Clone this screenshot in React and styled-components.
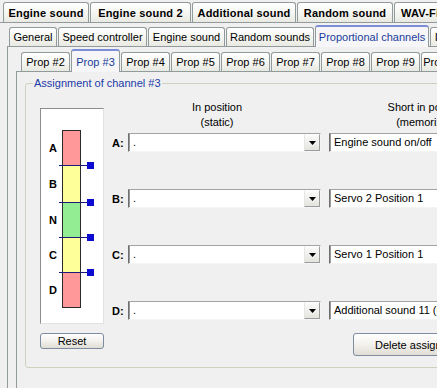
import styled, { createGlobalStyle, css } from "styled-components";

const GlobalStyle = createGlobalStyle`
  html, body {
    margin: 0;
    padding: 0;
    background: #f0f0f0;
  }
  body {
    font-family: "Liberation Sans", Arial, sans-serif;
    font-size: 11px;
    color: #000;
  }
`;

const Window = styled.div`
  width: 437px;
  height: 388px;
  overflow: hidden;
  background: #f0f0f0;
`;

const Strip = styled.div`
  display: flex;
  align-items: flex-end;
  box-sizing: border-box;
  height: ${(p) => p.$h}px;
  padding-left: ${(p) => p.$left}px;
  white-space: nowrap;
`;

const Tab = styled.div`
  flex: 0 0 auto;
  box-sizing: border-box;
  display: flex;
  align-items: center;
  justify-content: center;
  width: ${(p) => p.$w}px;
  height: ${(p) => p.$h}px;
  margin-right: 1px;
  border: 1px solid #919b9c;
  border-bottom: none;
  border-radius: 3px 3px 0 0;
  background: linear-gradient(#ffffff, #f5f5f1 55%, #e9e9e2);
  font-weight: ${(p) => (p.$bold ? 700 : 400)};
  letter-spacing: ${(p) => (p.$bold ? "0.2px" : "0")};
  overflow: hidden;
  ${(p) =>
    p.$active &&
    css`
      position: relative;
      z-index: 2;
      height: ${p.$h + p.$lift + 1}px;
      margin-bottom: -1px;
      border-top: 2px solid #7b8ed6;
      background: #f6f6f8;
      color: #1b3c9b;
    `}
`;

const Page = styled.div`
  border-top: 1px solid #919b9c;
  border-left: ${(p) => (p.$edge ? "1px solid #919b9c" : "none")};
  padding: ${(p) => p.$pad};
`;

const Group = styled.fieldset`
  width: 600px;
  margin: 0;
  padding: 0;
  border: 1px solid #d0d0bf;
  border-radius: 3px;
  min-width: 0;
`;

const Caption = styled.legend`
  margin-left: 7px;
  padding: 0 1px;
  line-height: 13px;
  color: #1c3aa9;
`;

const GroupBody = styled.div`
  display: flex;
  align-items: flex-start;
  gap: 8px;
  padding: 10px 0 11px 14px;
`;

const LeftCol = styled.div`
  display: flex;
  flex-direction: column;
  gap: 9px;
  margin-top: 8px;
`;

const SliderBox = styled.div`
  box-sizing: border-box;
  width: 64px;
  height: 216px;
  padding-top: 21px;
  background: #fff;
  border: 1px solid;
  border-color: #8d8d8d #e2e2e2 #e2e2e2 #8d8d8d;
`;

const Zone = styled.div`
  position: relative;
  display: flex;
  height: ${(p) => p.$h}px;
`;

const ZoneLetter = styled.span`
  box-sizing: border-box;
  width: 21px;
  padding-left: 8px;
  align-self: center;
  font-weight: 700;
`;

const ZoneFill = styled.div`
  box-sizing: border-box;
  width: 19px;
  background: ${(p) => p.$color};
  border-left: 1px solid #2a2a2a;
  border-right: 1px solid #2a2a2a;
  border-top: ${(p) => (p.$first ? "1px solid #2a2a2a" : "none")};
  border-bottom: ${(p) => (p.$last ? "1px solid #2a2a2a" : "none")};
`;

const Threshold = styled.div`
  position: absolute;
  z-index: 1;
  left: 18px;
  top: 100%;
  width: 28px;
  height: 1px;
  background: #1a1a7a;
  &::after {
    content: "";
    position: absolute;
    left: 28px;
    top: -3px;
    width: 7px;
    height: 7px;
    background: #0c0cd0;
  }
`;

const PushButton = styled.button`
  box-sizing: border-box;
  width: ${(p) => p.$w}px;
  height: ${(p) => p.$h}px;
  margin: ${(p) => p.$m || "0"};
  padding: 0;
  border: 1px solid #7d8ca0;
  border-radius: 3px;
  background: linear-gradient(#ffffff, #f4f3ef 45%, #e0ddd4);
  font-family: inherit;
  font-size: 11px;
  color: #000;
`;

const Assign = styled.div`
  display: flex;
  flex-direction: column;
`;

const HeadRow = styled.div`
  display: flex;
  padding-left: 16px;
  margin-bottom: 3px;
`;

const HeadCell = styled.div`
  width: ${(p) => p.$w}px;
  margin-right: ${(p) => p.$mr}px;
  text-align: center;
  line-height: 15px;
  white-space: nowrap;
`;

const Rows = styled.div`
  display: flex;
  flex-direction: column;
  gap: 37px;
`;

const Row = styled.div`
  display: flex;
  align-items: center;
  height: 19px;
`;

const RowLabel = styled.span`
  width: 16px;
  font-weight: 700;
`;

const Combo = styled.div`
  box-sizing: border-box;
  display: flex;
  width: ${(p) => p.$w}px;
  height: 19px;
  margin-right: 8px;
  background: #fff;
  border: 1px solid;
  border-color: #a3a3a3 #f4f4f4 #f4f4f4 #6e6e6e;
  box-shadow: inset 1px 0 0 #9a9a9a;
`;

const ComboText = styled.span`
  flex: 1;
  padding-left: 4px;
  line-height: 17px;
  white-space: nowrap;
  overflow: hidden;
`;

const DropButton = styled.span`
  box-sizing: border-box;
  display: flex;
  align-items: center;
  justify-content: center;
  width: 16px;
  height: 17px;
  background: linear-gradient(#fbfbfb, #e4e4de);
  border: 1px solid;
  border-color: #ffffff #9c9c9c #9c9c9c #e6e6e6;
`;

const Arrow = () => (
  <svg width="7" height="4" viewBox="0 0 7 4">
    <path d="M0 0h7L3.5 4z" fill="#000" />
  </svg>
);

const topTabs = [
  { t: "Engine sound", w: 86 },
  { t: "Engine sound 2", w: 101 },
  { t: "Additional sound", w: 104 },
  { t: "Random sound", w: 96 },
  { t: "WAV-Files", w: 68 },
];

const midTabs = [
  { t: "General", w: 48 },
  { t: "Speed controller", w: 89 },
  { t: "Engine sound", w: 77 },
  { t: "Random sounds", w: 88 },
  { t: "Proportional channels", w: 114, active: true },
  { t: "Info", w: 28 },
];

const propTabs = [2, 3, 4, 5, 6, 7, 8, 9, 10];

const zones = [
  { k: "A", h: 35, c: "#ff9999" },
  { k: "B", h: 37, c: "#ffff99" },
  { k: "N", h: 35, c: "#93ee93" },
  { k: "C", h: 35, c: "#ffff99" },
  { k: "D", h: 36, c: "#ff9999" },
];

const rows = [
  { k: "A", memo: "Engine sound on/off" },
  { k: "B", memo: "Servo 2 Position 1" },
  { k: "C", memo: "Servo 1 Position 1" },
  { k: "D", memo: "Additional sound 11 (On/Off)" },
];

export default function App() {
  return (
    <Window>
      <GlobalStyle />
      <Strip $h={22} $left={3}>
        {topTabs.map((tab) => (
          <Tab key={tab.t} $w={tab.w} $h={20} $bold>
            {tab.t}
          </Tab>
        ))}
      </Strip>
      <Page $pad="0 0 0 7px">
        <Strip $h={23} $left={2}>
          {midTabs.map((tab) => (
            <Tab key={tab.t} $w={tab.w} $h={19} $lift={2} $active={tab.active}>
              {tab.t}
            </Tab>
          ))}
        </Strip>
        <Page $edge $pad="0 0 0 8px">
          <Strip $h={24} $left={5}>
            {propTabs.map((n) => (
              <Tab key={n} $w={49} $h={19} $lift={3} $active={n === 3}>
                Prop #{n}
              </Tab>
            ))}
          </Strip>
          <Page $edge $pad="5px 0 30px 8px">
            <Group>
              <Caption>Assignment of channel #3</Caption>
              <GroupBody>
                <LeftCol>
                  <SliderBox>
                    {zones.map((z, i) => (
                      <Zone key={z.k} $h={z.h}>
                        <ZoneLetter>{z.k}</ZoneLetter>
                        <ZoneFill
                          $color={z.c}
                          $first={i === 0}
                          $last={i === zones.length - 1}
                        />
                        {i < zones.length - 1 && <Threshold />}
                      </Zone>
                    ))}
                  </SliderBox>
                  <PushButton $w={64} $h={16}>
                    Reset
                  </PushButton>
                </LeftCol>
                <Assign>
                  <HeadRow>
                    <HeadCell $w={178} $mr={22}>
                      In position
                      <br />
                      (static)
                    </HeadCell>
                    <HeadCell $w={198} $mr={0}>
                      Short in position
                      <br />
                      (memorized)
                    </HeadCell>
                  </HeadRow>
                  <Rows>
                    {rows.map((r) => (
                      <Row key={r.k}>
                        <RowLabel>{r.k}:</RowLabel>
                        <Combo $w={193}>
                          <ComboText>.</ComboText>
                          <DropButton>
                            <Arrow />
                          </DropButton>
                        </Combo>
                        <Combo $w={212}>
                          <ComboText>{r.memo}</ComboText>
                          <DropButton>
                            <Arrow />
                          </DropButton>
                        </Combo>
                      </Row>
                    ))}
                  </Rows>
                  <PushButton $w={135} $h={23} $m="13px 0 0 241px">
                    Delete assignment
                  </PushButton>
                </Assign>
              </GroupBody>
            </Group>
          </Page>
        </Page>
      </Page>
    </Window>
  );
}
